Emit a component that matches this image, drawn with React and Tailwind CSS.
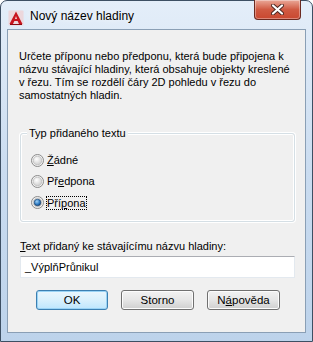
const font = { fontFamily: '"Liberation Sans", Arial, sans-serif' };

const Radio = ({ checked }) => (
  <svg width="13" height="13" viewBox="0 0 13 13" className="shrink-0">
    <defs>
      <radialGradient id="rin" cx="40%" cy="35%" r="70%">
        <stop offset="0%" stopColor="#ffffff" />
        <stop offset="100%" stopColor="#cbcbcb" />
      </radialGradient>
      <radialGradient id="rdot" cx="40%" cy="35%" r="70%">
        <stop offset="0%" stopColor="#9fd0f5" />
        <stop offset="60%" stopColor="#2f7cc4" />
        <stop offset="100%" stopColor="#0d3f78" />
      </radialGradient>
    </defs>
    <circle cx="6.5" cy="6.5" r="6" fill="#f2f2f2" stroke="#8b8b8b" strokeWidth="1" />
    <circle cx="6.5" cy="6.5" r="4.3" fill="url(#rin)" stroke="#bdbdbd" strokeWidth="0.8" />
    {checked && <circle cx="6.5" cy="6.5" r="3.3" fill="url(#rdot)" stroke="#1a3e66" strokeWidth="0.6" />}
  </svg>
);

const Button = ({ children, focused }) => (
  <button
    className={
      focused
        ? 'h-[20px] w-[72px] rounded-[3px] border border-[#3c7fb1] bg-gradient-to-b from-[#eaf6fd] via-[#d9f0fc] to-[#bee6fd] text-[11.5px] leading-[18px] text-black shadow-[inset_0_0_0_1px_#9ad3f5]'
        : 'h-[20px] w-[73px] rounded-[3px] border border-[#707070] bg-gradient-to-b from-[#f2f2f2] via-[#e6e6e6] to-[#cfcfcf] text-[11.5px] leading-[18px] text-black shadow-[inset_0_0_0_1px_#fcfcfc]'
    }
    style={font}
  >
    {children}
  </button>
);

export default function App() {
  return (
    <div className="h-[342px] w-[313px] bg-white" style={font}>
      <div className="flex h-full flex-col rounded-t-[7px] border border-[#3d4f63] bg-gradient-to-b from-[#e4eef9] via-[#cadcf0] to-[#bdd3eb] px-[6px] pb-[8px]">
        {/* Title bar */}
        <div className="flex h-[28px] items-start">
          <svg width="16" height="16" viewBox="0 0 16 16" className="ml-[1px] mt-[9px] shrink-0">
            <rect x="0.5" y="0.5" width="15" height="15" rx="1" fill="#f4c9c9" opacity="0.6" />
            <path d="M8 1.5 L14.5 14 L11 14 L9.6 11 L6.4 11 L5 14 L1.5 14 Z" fill="#c8141e" />
            <path d="M8 6 L9 9 L7 9 Z" fill="#f6d2d2" />
            <path d="M2 14 L14 14 L14 15 L2 15 Z" fill="#8c0a10" />
          </svg>
          <span className="ml-[6px] mt-[7px] whitespace-nowrap text-[12px] leading-[16px] text-black [text-shadow:0_0_6px_#ffffff]">
            Nový název hladiny
          </span>
          <button className="-mt-px ml-auto mr-[5px] flex h-[20px] w-[47px] items-center justify-center rounded-b-[4px] border border-t-0 border-[#6b2a20] bg-gradient-to-b from-[#e9a898] via-[#d05a42] to-[#c9472f] shadow-[inset_0_0_0_1px_rgba(255,255,255,0.35)]">
            <svg width="13" height="11" viewBox="0 0 13 11">
              <path d="M2 1.5 L11 9.5 M11 1.5 L2 9.5" stroke="#4a2620" strokeWidth="4" strokeLinecap="round" />
              <path d="M2 1.5 L11 9.5 M11 1.5 L2 9.5" stroke="#ffffff" strokeWidth="2.2" strokeLinecap="round" />
            </svg>
          </button>
        </div>

        {/* Client area */}
        <div className="flex-1 border border-[#8a9fb5] bg-[#f0f0f0] text-black">
          <p className="whitespace-nowrap pl-[11px] pt-[20px] text-[11px] leading-[13px]">
            Určete příponu nebo předponu, která bude připojena k
            <br />
            názvu stávající hladiny, která obsahuje objekty kreslené
            <br />
            v řezu. Tím se rozdělí čáry 2D pohledu v řezu do
            <br />
            samostatných hladin.
          </p>

          {/* Group box */}
          <div className="relative ml-[12px] mt-[31px] w-[275px] rounded-[3px] border border-[#d5dfe5] pb-[8px] pl-[10px] pt-[16px] shadow-[0_0_0_1px_#ffffff,inset_0_0_0_1px_#ffffff]">
            <span className="absolute -top-[8px] left-[6px] bg-[#f0f0f0] px-[2px] text-[11px] leading-[15px]">
              Typ přidaného textu
            </span>
            <div className="flex h-[21px] items-center gap-[3px] text-[11px]">
              <Radio />
              <span>
                <span className="underline">Ž</span>ádné
              </span>
            </div>
            <div className="flex h-[21px] items-center gap-[3px] text-[11px]">
              <Radio />
              <span>
                Př<span className="underline">e</span>dpona
              </span>
            </div>
            <div className="flex h-[21px] items-center gap-[3px] text-[11px]">
              <Radio checked />
              <span className="leading-[12px] outline outline-1 outline-dotted outline-black">
                Pří<span className="underline">p</span>ona
              </span>
            </div>
          </div>

          <div className="ml-[12px] mt-[18px] text-[11px] leading-[13px]">
            <span className="underline">T</span>ext přidaný ke stávajícímu názvu hladiny:
          </div>
          <div className="ml-[12px] mt-[3px] flex h-[22px] w-[275px] items-center border border-[#e3e9ef] border-t-[#abadb3] bg-white pl-[4px] text-[11px]">
            _VýplňPrůnikul
          </div>

          <div className="mt-[12px] flex gap-[13px] pl-[28px]">
            <Button focused>OK</Button>
            <Button>Storno</Button>
            <Button>
              N<span className="underline">á</span>pověda
            </Button>
          </div>
        </div>
      </div>
    </div>
  );
}
